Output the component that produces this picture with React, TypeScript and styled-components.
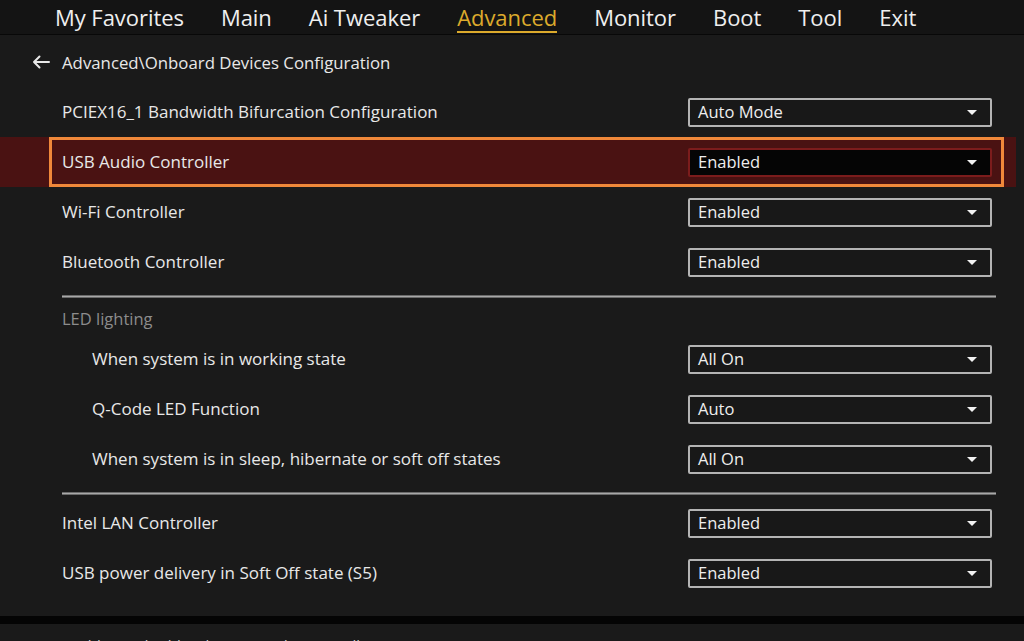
import styled, { createGlobalStyle } from 'styled-components';

const GlobalStyle = createGlobalStyle`
  html, body {
    margin: 0;
    padding: 0;
    background: #1a1a1a;
  }
  * {
    box-sizing: border-box;
  }
`;

const tabs = ['My Favorites', 'Main', 'Ai Tweaker', 'Advanced', 'Monitor', 'Boot', 'Tool', 'Exit'];

type Item =
  | { kind: 'row'; label: string; value: string; indent?: boolean; selected?: boolean }
  | { kind: 'sep'; tight?: boolean }
  | { kind: 'group'; label: string };

const items: Item[] = [
  { kind: 'row', label: 'PCIEX16_1 Bandwidth Bifurcation Configuration', value: 'Auto Mode' },
  { kind: 'row', label: 'USB Audio Controller', value: 'Enabled', selected: true },
  { kind: 'row', label: 'Wi-Fi Controller', value: 'Enabled' },
  { kind: 'row', label: 'Bluetooth Controller', value: 'Enabled' },
  { kind: 'sep' },
  { kind: 'group', label: 'LED lighting' },
  { kind: 'row', label: 'When system is in working state', value: 'All On', indent: true },
  { kind: 'row', label: 'Q-Code LED Function', value: 'Auto', indent: true },
  { kind: 'row', label: 'When system is in sleep, hibernate or soft off states', value: 'All On', indent: true },
  { kind: 'sep', tight: true },
  { kind: 'row', label: 'Intel LAN Controller', value: 'Enabled' },
  { kind: 'row', label: 'USB power delivery in Soft Off state (S5)', value: 'Enabled' },
];

const App = () => {
  return (
    <Screen>
      <GlobalStyle />
      <NavBar>
        {tabs.map((t) => (
          <Tab key={t} active={t === 'Advanced'}>{t}</Tab>
        ))}
      </NavBar>

      <Breadcrumb>
        <BackIcon width="18" height="14" viewBox="0 0 18 14">
          <path d="M17 7H2M7.5 1.5L2 7l5.5 5.5" stroke="#e8e8e8" strokeWidth="2" fill="none" strokeLinecap="round" strokeLinejoin="round" />
        </BackIcon>
        <span>Advanced\Onboard Devices Configuration</span>
      </Breadcrumb>

      <List>
        {items.map((item, i) => {
          if (item.kind === 'sep') return <Separator key={i} tight={!!item.tight} />;
          if (item.kind === 'group') return <GroupLabel key={i}>{item.label}</GroupLabel>;
          return (
            <RowBand key={i} selected={!!item.selected}>
              <Row selected={!!item.selected}>
                <Label indent={!!item.indent}>{item.label}</Label>
                <Select selected={!!item.selected}>
                  <span>{item.value}</span>
                  <Caret width="10" height="5" viewBox="0 0 10 5">
                    <path d="M0 0h10L5 5z" fill="#f2f2f2" />
                  </Caret>
                </Select>
              </Row>
            </RowBand>
          );
        })}
      </List>

      <Footer>
        <HelpText>Enables or disables the USB Audio Controller.</HelpText>
      </Footer>
    </Screen>
  );
};

// Styled Components
const Screen = styled.div`
  width: 1024px;
  height: 641px;
  overflow: hidden;
  background: #1a1a1a;
  font-family: 'Open Sans', 'Noto Sans', sans-serif;
  color: #e8e8e8;
  display: flex;
  flex-direction: column;
`;

const NavBar = styled.div`
  height: 35px;
  flex-shrink: 0;
  display: flex;
  align-items: center;
  gap: 37px;
  padding-left: 55px;
  background: #141414;
  border-bottom: 1px solid #080808;
`;

const Tab = styled.div<{ active: boolean }>`
  font-size: 22px;
  line-height: 28px;
  margin-top: 1px;
  color: ${(p) => (p.active ? '#dcaa2c' : '#efefef')};
  border-bottom: 2px solid ${(p) => (p.active ? '#dcaa2c' : 'transparent')};
  letter-spacing: -0.05px;
`;

const Breadcrumb = styled.div`
  height: 52px;
  flex-shrink: 0;
  display: flex;
  align-items: center;
  gap: 12px;
  padding-left: 32px;
  padding-top: 4px;
  padding-bottom: 2px;
  font-size: 16.8px;
  color: #e8e8e8;
`;

const BackIcon = styled.svg`
  display: block;
`;

const List = styled.div`
  display: flex;
  flex-direction: column;
  flex: 1;
`;

const RowBand = styled.div<{ selected: boolean }>`
  width: 1016px;
  height: 50px;
  background: ${(p) => (p.selected ? '#4a1212' : 'transparent')};
  display: flex;
`;

const Row = styled.div<{ selected: boolean }>`
  margin-left: 49px;
  width: 955px;
  height: 50px;
  display: flex;
  align-items: center;
  justify-content: space-between;
  padding: 0 9px 0 10px;
  border: 3px solid ${(p) => (p.selected ? '#f0883a' : 'transparent')};
`;

const Label = styled.div<{ indent: boolean }>`
  font-size: 17px;
  color: #e8e8e8;
  padding-left: ${(p) => (p.indent ? '30px' : '0')};
  padding-bottom: 2px;
`;

const Select = styled.div<{ selected: boolean }>`
  width: 304px;
  height: 29px;
  display: flex;
  align-items: center;
  justify-content: space-between;
  padding: 0 13px 2px 8px;
  font-size: 16.5px;
  color: #eeeeee;
  background: ${(p) => (p.selected ? '#050505' : '#181818')};
  border: 2px solid ${(p) => (p.selected ? '#7c1c1c' : '#b4b4b4')};
  border-radius: 2px;

  svg {
    margin-top: 2px;
  }
`;

const Caret = styled.svg`
  display: block;
`;

const Separator = styled.div<{ tight: boolean }>`
  margin: 8px 28px ${(p) => (p.tight ? '3px' : '8px')} 62px;
  height: 3px;
  background: #a8a8a8;
  border-top: 1px solid #6a6a6a;
  border-bottom: 1px solid #6a6a6a;
`;

const GroupLabel = styled.div`
  height: 28px;
  display: flex;
  align-items: center;
  padding-left: 62px;
  padding-bottom: 4px;
  font-size: 16.5px;
  color: #8c8c8c;
`;

const Footer = styled.div`
  flex-shrink: 0;
  height: 25px;
  border-top: 8px solid #040404;
  padding: 11px 0 0 62px;
  overflow: hidden;
`;

const HelpText = styled.div`
  font-size: 15px;
  line-height: 20px;
  color: #d0d0d0;
`;

export default App;
